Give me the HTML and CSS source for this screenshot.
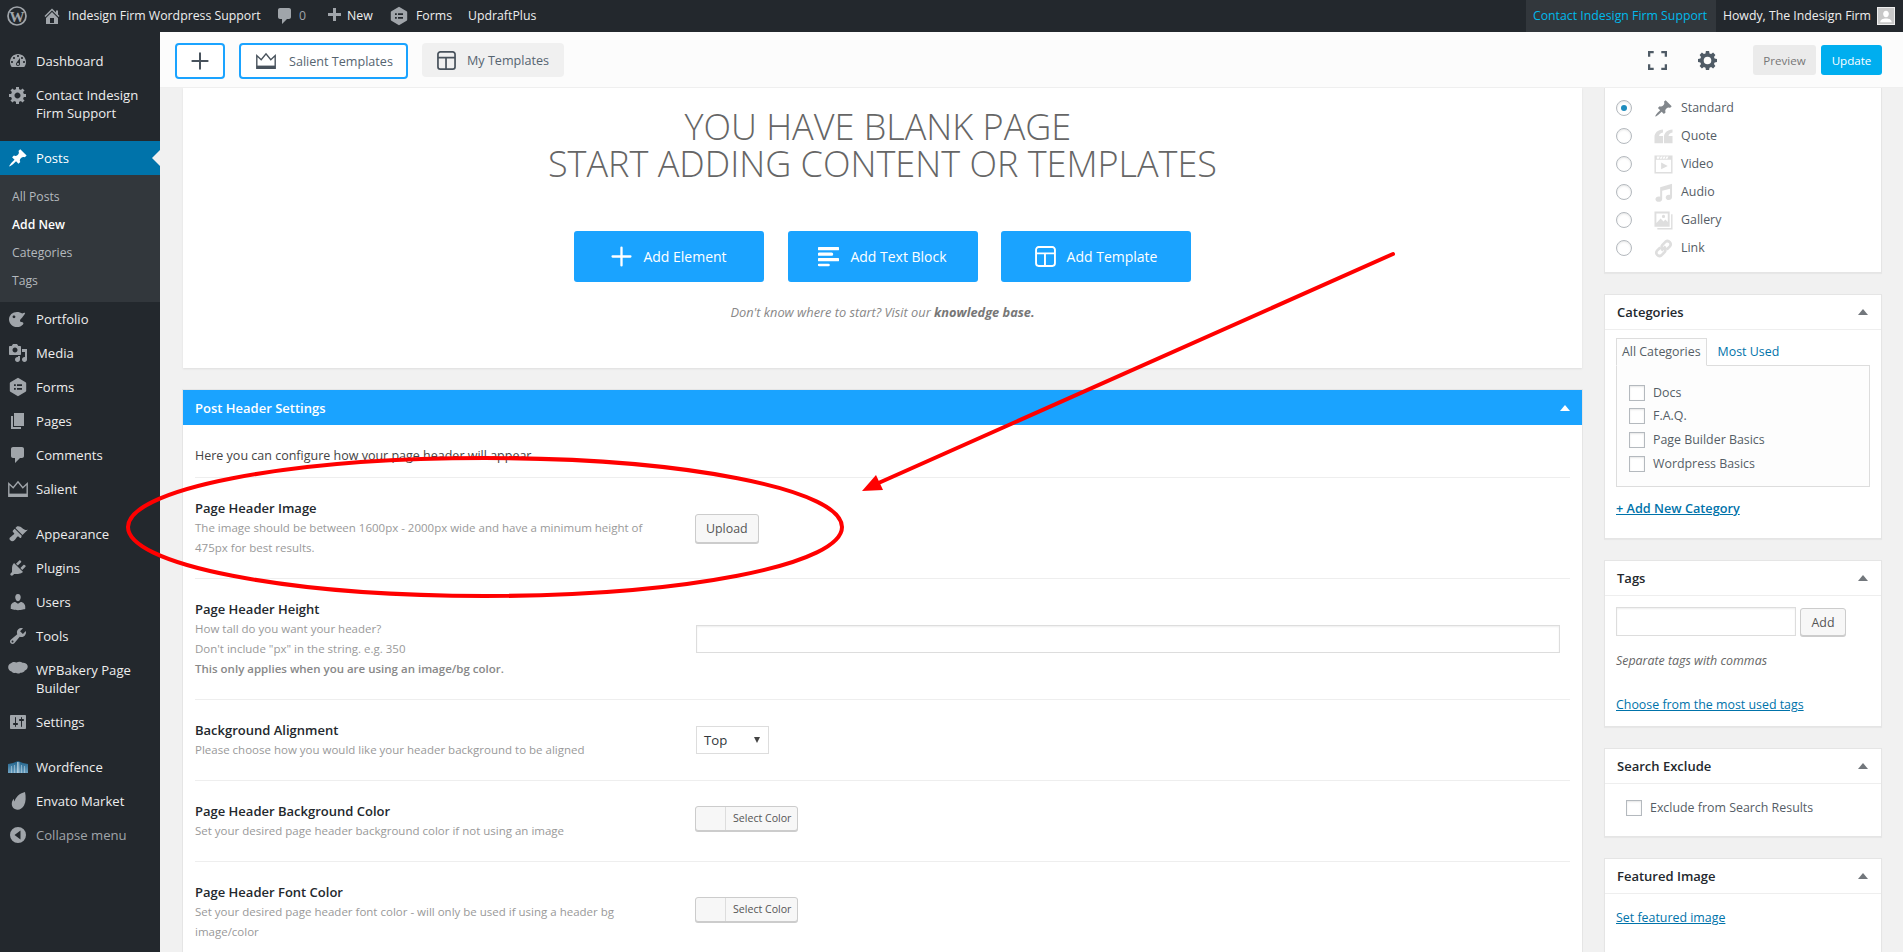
FILE: index.html
```html
<!DOCTYPE html>
<html lang="en">
<head>
<meta charset="utf-8">
<title>Add New Post</title>
<link rel="stylesheet" href="styles.css">
</head>
<body>
<svg class="sprite" width="0" height="0">
  <defs>
    <symbol id="i-dash" viewBox="0 0 20 20"><path d="M3.76 16h12.48c1.1-1.37 1.76-3.11 1.76-5 0-4.42-3.58-8-8-8s-8 3.58-8 8c0 1.89.66 3.63 1.76 5zM10 4c.55 0 1 .45 1 1s-.45 1-1 1-1-.45-1-1 .45-1 1-1zM6 6c.55 0 1 .45 1 1s-.45 1-1 1-1-.45-1-1 .45-1 1-1zm8 0c.55 0 1 .45 1 1s-.45 1-1 1-1-.45-1-1 .45-1 1-1zm-5.37 5.55L12 7v6c0 1.1-.9 2-2 2s-2-.9-2-2c0-.57.24-1.08.63-1.45zM4 10c.55 0 1 .45 1 1s-.45 1-1 1-1-.45-1-1 .45-1 1-1zm12 0c.55 0 1 .45 1 1s-.45 1-1 1-1-.45-1-1 .45-1 1-1zm-5 3c0-.55-.45-1-1-1s-1 .45-1 1 .45 1 1 1 1-.45 1-1z"/></symbol>
    <symbol id="i-gear" viewBox="0 0 20 20"><path fill-rule="evenodd" d="M18 12h-2.18c-.17.7-.44 1.35-.81 1.93l1.54 1.54-2.1 2.1-1.54-1.54c-.58.36-1.23.63-1.91.79V19H8v-2.18c-.68-.16-1.33-.43-1.91-.79l-1.54 1.54-2.12-2.12 1.54-1.54c-.36-.58-.63-1.23-.79-1.91H1V9.03h2.17c.16-.7.44-1.35.8-1.94L2.43 5.55l2.1-2.1 1.54 1.54c.58-.37 1.24-.64 1.93-.81V2h3v2.18c.68.16 1.33.43 1.91.79l1.54-1.54 2.12 2.12-1.54 1.54c.36.59.64 1.24.8 1.94H18V12zm-8.5 1.5c1.66 0 3-1.34 3-3s-1.34-3-3-3-3 1.34-3 3 1.34 3 3 3z"/></symbol>
    <symbol id="i-pin" viewBox="0 0 20 20"><path d="M10.44 3.02l1.82-1.82 6.36 6.35-1.83 1.82c-1.05-.68-2.48-.57-3.41.36l-.75.75c-.92.93-1.04 2.35-.35 3.41l-1.83 1.82-2.41-2.41-2.8 2.79c-.42.42-3.38 2.71-3.8 2.29s1.86-3.39 2.28-3.81l2.79-2.79L4.1 9.36l1.83-1.82c1.05.69 2.48.57 3.41-.36l.75-.75c.93-.92 1.05-2.35.35-3.41z"/></symbol>
    <symbol id="i-art" viewBox="0 0 20 20"><path fill-rule="evenodd" d="M9 3c-4.400 0-8 3.200-8 7.200S4.400 18 9 18c2.400 0 4.600-1 6-2.600 1.200-1.500-.2-2.600-1.500-2.500-1.100.1-1.900-.9-1.300-2 .8-1.400 3.100-2.800 5-6.900-.8-.6-1.900-.1-2.900.6C12.900 3.700 11 3 9 3zM6 6.500c.8 0 1.400.6 1.400 1.300S6.800 9.200 6 9.200s-1.400-.6-1.400-1.400S5.200 6.500 6 6.500z"/></symbol>
    <symbol id="i-media" viewBox="0 0 20 20"><path d="M13 11V4c0-.55-.45-1-1-1h-1.670L9 1H5L3.670 3H2c-.55 0-1 .45-1 1v7c0 .55.45 1 1 1h10c.55 0 1-.45 1-1zM7 4.500c1.380 0 2.500 1.120 2.500 2.500S8.380 9.500 7 9.500 4.500 8.380 4.500 7 5.620 4.500 7 4.500zM14 6h5v10.500c0 1.380-1.120 2.500-2.500 2.500S14 17.880 14 16.500s1.120-2.500 2.500-2.500c.17 0 .34.02.5.05V9h-3V6zm-4 8.050V13h2v3.500c0 1.380-1.120 2.500-2.500 2.500S7 17.880 7 16.500 8.120 14 9.500 14c.17 0 .34.02.5.05z"/></symbol>
    <symbol id="i-forms" viewBox="0 0 20 20"><path fill-rule="evenodd" d="M10 .8l7.600 4.400c.4.200.6.600.6 1v7.600c0 .4-.2.800-.6 1L10 19.200 2.400 14.800c-.4-.2-.6-.6-.6-1V6.200c0-.4.2-.8.6-1zM6 7.200v1.900h1.800V7.200zm3 0v1.900h5V7.200zM6 10.900v1.900h1.800v-1.900zm3 0v1.900h5v-1.900z"/></symbol>
    <symbol id="i-page" viewBox="0 0 20 20"><path d="M6 15V2h10v13H6zm-1 1h8v2H3V5h2v11z"/></symbol>
    <symbol id="i-comment" viewBox="0 0 20 20"><path d="M5 2h9c1.100 0 2 .9 2 2v7c0 1.100-.9 2-2 2h-2l-5 5v-5H5c-1.100 0-2-.9-2-2V4c0-1.100.9-2 2-2z"/></symbol>
    <symbol id="i-crown" viewBox="0 0 20 20"><path fill="none" stroke="currentColor" stroke-width="1.400" d="M.8 17.200V4.600l4.400 4.200L10 2.800l4.800 6 4.400-4.200v12.600z"/><path d="M.8 14.600h18.400v2.600H.8z"/></symbol>
    <symbol id="i-brush" viewBox="0 0 20 20"><path d="M14.480 11.060L7.410 3.990l1.500-1.500c.5-.56 2.300-.47 3.510.32 1.210.8 1.430 1.280 2.910 2.100 1.180.64 2.450 1.260 4.450.85zm-.71.71L6.700 4.700 4.930 6.470c-.39.39-.39 1.020 0 1.410l1.060 1.060c.39.39.39 1.030 0 1.420-.6.6-1.430 1.110-2.210 1.690-.35.26-.7.53-1.010.84C1.430 13.230.91 14.970 2.300 16.360s3.130.87 4.440-.44c.31-.31.58-.66.84-1.010.58-.78 1.090-1.610 1.690-2.210.39-.39 1.030-.39 1.420 0l1.060 1.060c.39.39 1.020.39 1.410 0z"/></symbol>
    <symbol id="i-plug" viewBox="0 0 20 20"><path d="M13.110 4.360L9.870 7.600 8 5.730l3.240-3.240c.35-.34 1.050-.2 1.560.32.52.51.66 1.210.31 1.550zm-8 1.770l.91-1.120 9.010 9.010-1.190.84c-.71.71-2.630 1.160-3.820 1.160H6.140L4.900 17.260c-.59.59-1.540.59-2.120 0-.59-.58-.59-1.530 0-2.120l1.240-1.240v-3.880c0-1.130.4-3.190 1.090-3.890zm7.260 3.970l3.240-3.240c.34-.35 1.040-.21 1.550.31.52.51.66 1.210.31 1.550l-3.240 3.250z"/></symbol>
    <symbol id="i-user" viewBox="0 0 20 20"><path d="M10 9.250c-2.270 0-2.730-3.440-2.730-3.440C7 4.020 7.820 2 9.970 2c2.160 0 2.980 2.020 2.710 3.810 0 0-.41 3.440-2.68 3.440zm0 2.570L12.720 10c2.390 0 4.520 2.330 4.520 4.530v2.490s-3.650 1.130-7.240 1.130c-3.650 0-7.240-1.130-7.240-1.130v-2.490c0-2.250 1.940-4.480 4.470-4.480z"/></symbol>
    <symbol id="i-tool" viewBox="0 0 20 20"><path fill-rule="evenodd" d="M16.680 9.770c-1.340 1.340-3.300 1.670-4.950.99l-5.410 6.520c-.99.99-2.590.99-3.580 0s-.99-2.590 0-3.570l6.520-5.42c-.68-1.650-.35-3.61.99-4.950 1.280-1.280 3.120-1.620 4.720-1.060l-2.890 2.890 2.820 2.820 2.860-2.870c.53 1.580.18 3.390-1.080 4.650zM3.810 16.210c.4.390 1.040.39 1.430 0 .4-.4.4-1.040 0-1.430-.39-.4-1.030-.4-1.430 0-.39.39-.39 1.030 0 1.430z"/></symbol>
    <symbol id="i-cloud" viewBox="0 0 20 20"><path d="M3 3.200C4.500 1.800 7 1.700 8.500 2.600 10.300 1.400 13 1.500 14.500 2.800c2-.3 4.300.7 5 2.800.7 2.200-.6 4.400-2.700 5-.7 1.600-2.700 2.700-4.400 2.100-1.200 1.100-3.400 1.100-4.600.1-1.500.5-3.400 0-4.200-1.300C1.500 11 0 9 .2 6.800.4 5 1.500 3.700 3 3.200z"/></symbol>
    <symbol id="i-sliders" viewBox="0 0 20 20"><path fill-rule="evenodd" d="M18 16V4c0-.55-.45-1-1-1H3c-.55 0-1 .45-1 1v12c0 .55.45 1 1 1h14c.55 0 1-.45 1-1zM8 11h1c.55 0 1 .45 1 1s-.45 1-1 1H8v1.500c0 .28-.22.5-.5.5s-.5-.22-.5-.5V13H6c-.55 0-1-.45-1-1s.45-1 1-1h1V5.500c0-.28.22-.5.5-.5s.5.22.5.5V11zm5-2h-1c-.55 0-1-.45-1-1s.45-1 1-1h1V5.500c0-.28.22-.5.5-.5s.5.22.5.5V7h1c.55 0 1 .45 1 1s-.45 1-1 1h-1v5.500c0 .28-.22.5-.5.5s-.5-.22-.5-.5V9z"/></symbol>
    <symbol id="i-leaf" viewBox="0 0 20 20"><path d="M17 1c1 4.500 1 10-1 13.500-1.500 2.800-4 4.300-6.500 4.200-3.800-.1-6-3-5.700-6.400.2-2 1-3.400 2-4.500.1 1.200.3 2 .8 2.800C7.500 6.500 11 2.500 17 1z"/></symbol>
    <symbol id="i-collapse" viewBox="0 0 20 20"><path fill-rule="evenodd" d="M10 2a8 8 0 110 16 8 8 0 010-16zm2.500 3.500L6.500 10l6 4.500z"/></symbol>
    <symbol id="i-plus" viewBox="0 0 20 20"><path d="M17 7v3h-5v5H9v-5H4V7h5V2h3v5h5z"/></symbol>
    <symbol id="i-quote" viewBox="0 0 20 20"><path d="M9.500 2.500v3.300C7 6.300 5.500 7.700 5.300 9.500h4.200v7.500H.5v-6.500C.5 6 3.800 3 9.500 2.500zm10 0v3.300c-2.500.5-4 1.900-4.200 3.700h4.200v7.500h-9v-6.500c0-4.500 3.300-7.500 9-8z"/></symbol>
    <symbol id="i-video" viewBox="0 0 20 20"><path fill-rule="evenodd" d="M.5.500h19v19H.5zM2 5v13h16V5zm5.500 3l7 3.500-7 3.500zM3 1.500v2.500h2l1.200-2.500zm4.200 0L6 4h2l1.200-2.500zm3 0L9 4h2l1.200-2.500zm3 0L12 4h2l1.200-2.500z"/></symbol>
    <symbol id="i-audio" viewBox="0 0 20 20"><path d="M6.500 4.500L19 .8v14c0 1.900-1.500 3.200-3.400 3.200s-3.300-1.100-3.300-2.700 1.500-2.900 3.400-2.900c.4 0 .8.100 1.200.2V6L8.600 8.200v8.600c0 1.700-1.500 3-3.400 3S1.500 18.700 1.500 17s1.500-2.900 3.400-2.900c.6 0 1.100.1 1.600.3z"/></symbol>
    <symbol id="i-gallery" viewBox="0 0 20 20"><path fill-rule="evenodd" d="M.5.500h16v16H.5zM2.500 2.500v10l4.500-4.500 3 3 2-2 2.500 2.500v-9zm7.500 1.500a1.700 1.700 0 110 3.400 1.700 1.700 0 010-3.400zM18 3.500h1.500v16h-16V18H18z"/></symbol>
    <symbol id="i-link" viewBox="0 0 20 20"><path fill="none" stroke="currentColor" stroke-width="2.800" d="M7.800 12.200l4.400-4.400M6.600 8.900l-3.300 3.300a3.400 3.400 0 004.500 5l3.300-3.300a3.400 3.400 0 00.3-4M13.400 11.100l3.300-3.300a3.400 3.400 0 00-4.500-5L8.900 6.100a3.400 3.400 0 00-.3 4"/></symbol>
    <symbol id="i-layout" viewBox="0 0 20 20"><path fill="none" stroke="currentColor" stroke-width="1.800" d="M3.500 1h13A2.500 2.500 0 0119 3.500v13a2.500 2.500 0 01-2.500 2.500h-13A2.500 2.500 0 011 16.500v-13A2.500 2.500 0 013.500 1zM1 7h18M9.500 7v12"/></symbol>
    <symbol id="i-lines" viewBox="0 0 20 20"><path d="M1 1h18a1 1 0 010 3H1a1 1 0 010-3zm0 5.300h12a1 1 0 010 3H1a1 1 0 010-3zm0 5.200h18a1 1 0 010 3H1a1 1 0 010-3zm0 5.300h9a1 1 0 010 2.500H1a1 1 0 010-2.500z"/></symbol>
    <symbol id="i-thin-plus" viewBox="0 0 20 20"><path fill="none" stroke="currentColor" stroke-width="2.200" stroke-linecap="round" d="M10 1.500v17M1.500 10h17"/></symbol>
  </defs>
</svg>

<header class="adminbar">
  <div class="ab-wplogo"><svg viewBox="0 0 20 20" class="ab-ic-w"><circle cx="10" cy="10" r="9" fill="none" stroke="currentColor" stroke-width="1.700"/><text x="10" y="15.500" text-anchor="middle" class="ab-w-letter">W</text></svg></div>
  <div class="ab-item ab-site"><svg class="ab-ic-home" viewBox="0 0 20 20"><path d="M16 8.500l1.530 1.530-1.060 1.060L10 4.620l-6.470 6.470-1.060-1.060L10 2.500l4 4v-2h2v4zm-6-2.460l6 5.990V18H4v-5.970zM12 17v-5H8v5h4z"/></svg>Indesign Firm Wordpress Support</div>
  <div class="ab-item ab-comments"><svg class="ab-ic-s"><use href="#i-comment"/></svg><span class="ab-count">0</span></div>
  <div class="ab-item ab-new"><svg class="ab-ic-s"><use href="#i-plus"/></svg>New</div>
  <div class="ab-item ab-forms"><svg class="ab-ic-s"><use href="#i-forms"/></svg>Forms</div>
  <div class="ab-item ab-updraft">UpdraftPlus</div>
  <div class="ab-right">
    <div class="ab-contact">Contact Indesign Firm Support</div>
    <div class="ab-howdy">Howdy, The Indesign Firm<span class="ab-avatar"><svg viewBox="0 0 18 18"><rect width="18" height="18" fill="#c8c8c8"/><path fill="#fff" d="M9 3c2 0 3.200 1.600 3.200 3.600S11 10.500 9 10.500 5.800 8.600 5.800 6.600 7 3 9 3zM2.500 16c.2-3 3-4.200 6.500-4.200s6.300 1.200 6.500 4.200z"/></svg></span></div>
  </div>
</header>

<div class="shell">
  <nav class="adminmenu">
    <ul class="menu">
      <li class="mi"><svg class="mi-ic"><use href="#i-dash"/></svg><span>Dashboard</span></li>
      <li class="mi"><svg class="mi-ic"><use href="#i-gear"/></svg><span>Contact Indesign Firm Support</span></li>
      <li class="sep"></li>
      <li class="mi current"><svg class="mi-ic"><use href="#i-pin"/></svg><span>Posts</span></li>
      <li class="submenu">
        <div class="sub">All Posts</div>
        <div class="sub on">Add New</div>
        <div class="sub">Categories</div>
        <div class="sub">Tags</div>
      </li>
      <li class="mi"><svg class="mi-ic"><use href="#i-art"/></svg><span>Portfolio</span></li>
      <li class="mi"><svg class="mi-ic"><use href="#i-media"/></svg><span>Media</span></li>
      <li class="mi"><svg class="mi-ic"><use href="#i-forms"/></svg><span>Forms</span></li>
      <li class="mi"><svg class="mi-ic"><use href="#i-page"/></svg><span>Pages</span></li>
      <li class="mi"><svg class="mi-ic"><use href="#i-comment"/></svg><span>Comments</span></li>
      <li class="mi"><svg class="mi-ic"><use href="#i-crown"/></svg><span>Salient</span></li>
      <li class="sep"></li>
      <li class="mi"><svg class="mi-ic"><use href="#i-brush"/></svg><span>Appearance</span></li>
      <li class="mi"><svg class="mi-ic"><use href="#i-plug"/></svg><span>Plugins</span></li>
      <li class="mi"><svg class="mi-ic"><use href="#i-user"/></svg><span>Users</span></li>
      <li class="mi"><svg class="mi-ic"><use href="#i-tool"/></svg><span>Tools</span></li>
      <li class="mi"><svg class="mi-ic"><use href="#i-cloud"/></svg><span>WPBakery Page Builder</span></li>
      <li class="mi"><svg class="mi-ic"><use href="#i-sliders"/></svg><span>Settings</span></li>
      <li class="sep"></li>
      <li class="mi"><svg class="mi-ic" viewBox="0 0 20 12"><defs><linearGradient id="wf" x1="0" y1="0" x2="0" y2="1"><stop offset="0" stop-color="#1c5f88"/><stop offset="1" stop-color="#6ea2c2"/></linearGradient></defs><path fill="url(#wf)" d="M0 3l5-1 5-2 5 2 5 1v9H0z"/><path fill="#cfe0ea" d="M9 1h.7v11H9zm1.500 0h.7v11h-.7zM3 5h.5v7H3zm13 0h.5v7H16zM6 4h.5v8H6zm7 0h.5v8H13z"/></svg><span>Wordfence</span></li>
      <li class="mi"><svg class="mi-ic"><use href="#i-leaf"/></svg><span>Envato Market</span></li>
      <li class="mi collapse"><svg class="mi-ic"><use href="#i-collapse"/></svg><span>Collapse menu</span></li>
    </ul>
  </nav>

  <div class="workspace">
    <div class="toolbar">
      <button class="tb-btn tb-add"><svg class="tb-plus"><use href="#i-thin-plus"/></svg></button>
      <button class="tb-btn tb-salient"><svg class="tb-crown"><use href="#i-crown"/></svg>Salient Templates</button>
      <button class="tb-btn tb-mine"><svg class="tb-layout"><use href="#i-layout"/></svg>My Templates</button>
      <div class="tb-right">
        <svg class="tb-full" viewBox="0 0 20 20"><path fill="none" stroke="#4f5b66" stroke-width="2.400" d="M1.200 6V1.200H6M14 1.200h4.800V6M18.800 14v4.800H14M6 18.800H1.200V14"/></svg>
        <svg class="tb-gear" viewBox="0 0 20 20"><path fill="#4f5b66" fill-rule="evenodd" d="M8.300 0h3.400l.4 2.500 1.700.7 2.100-1.500 2.400 2.400-1.500 2.100.7 1.700 2.500.4v3.400l-2.500.4-.7 1.700 1.500 2.100-2.400 2.400-2.100-1.500-1.700.7-.4 2.500H8.300l-.4-2.500-1.700-.7-2.100 1.500-2.400-2.400 1.500-2.100-.7-1.700-2.500-.4V8.300l2.500-.4.7-1.700-1.500-2.100 2.400-2.400 2.100 1.500 1.700-.7zM10 6a4 4 0 100 8 4 4 0 000-8z"/></svg>
        <button class="tb-preview">Preview</button>
        <button class="tb-update">Update</button>
      </div>
    </div>

    <div class="columns">
      <main class="main">
        <section class="blank">
          <h1 class="blank-title">YOU HAVE BLANK PAGE&nbsp;<br>START ADDING CONTENT OR TEMPLATES</h1>
          <div class="blank-actions">
            <button class="cta"><svg class="cta-ic"><use href="#i-thin-plus"/></svg>Add Element</button>
            <button class="cta"><svg class="cta-ic"><use href="#i-lines"/></svg>Add Text Block</button>
            <button class="cta"><svg class="cta-ic"><use href="#i-layout"/></svg>Add Template</button>
          </div>
          <p class="blank-hint">Don't know where to start? Visit our <b>knowledge base.</b></p>
        </section>

        <section class="settings">
          <header class="settings-head"><span>Post Header Settings</span><i class="tri tri-white"></i></header>
          <div class="settings-body">
            <p class="intro">Here you can configure how your page header will appear.</p>
            <div class="row">
              <div class="row-label"><h4>Page Header Image</h4><p>The image should be between 1600px - 2000px wide and have a minimum height of 475px for best results.</p></div>
              <div class="row-field"><button class="wpbtn">Upload</button></div>
            </div>
            <div class="row">
              <div class="row-label"><h4>Page Header Height</h4><p>How tall do you want your header?<br>Don't include "px" in the string. e.g. 350<br><span class="medium">This only applies when you are using an image/bg color.</span></p></div>
              <div class="row-field wide"><input class="txt" type="text"></div>
            </div>
            <div class="row">
              <div class="row-label"><h4>Background Alignment</h4><p>Please choose how you would like your header background to be aligned</p></div>
              <div class="row-field"><div class="sel"><span>Top</span><i class="sel-arrow"></i></div></div>
            </div>
            <div class="row">
              <div class="row-label"><h4>Page Header Background Color</h4><p>Set your desired page header background color if not using an image</p></div>
              <div class="row-field"><div class="color"><span class="swatch"></span><span class="color-text">Select Color</span></div></div>
            </div>
            <div class="row">
              <div class="row-label"><h4>Page Header Font Color</h4><p>Set your desired page header font color - will only be used if using a header bg image/color</p></div>
              <div class="row-field"><div class="color"><span class="swatch"></span><span class="color-text">Select Color</span></div></div>
            </div>
          </div>
        </section>
      </main>

      <aside class="side">
        <section class="box box-format">
          <label class="fmt"><span class="radio on"></span><svg class="fmt-ic dark"><use href="#i-pin"/></svg>Standard</label>
          <label class="fmt"><span class="radio"></span><svg class="fmt-ic"><use href="#i-quote"/></svg>Quote</label>
          <label class="fmt"><span class="radio"></span><svg class="fmt-ic"><use href="#i-video"/></svg>Video</label>
          <label class="fmt"><span class="radio"></span><svg class="fmt-ic"><use href="#i-audio"/></svg>Audio</label>
          <label class="fmt"><span class="radio"></span><svg class="fmt-ic"><use href="#i-gallery"/></svg>Gallery</label>
          <label class="fmt"><span class="radio"></span><svg class="fmt-ic"><use href="#i-link"/></svg>Link</label>
        </section>

        <section class="box">
          <header class="box-head"><span>Categories</span><i class="tri"></i></header>
          <div class="box-body cats">
            <div class="tabs"><span class="tab on">All Categories</span><span class="tab">Most Used</span></div>
            <div class="tab-panel">
              <label class="chk"><span class="check"></span>Docs</label>
              <label class="chk"><span class="check"></span>F.A.Q.</label>
              <label class="chk"><span class="check"></span>Page Builder Basics</label>
              <label class="chk"><span class="check"></span>Wordpress Basics</label>
            </div>
            <a class="link add-cat">+ Add New Category</a>
          </div>
        </section>

        <section class="box">
          <header class="box-head"><span>Tags</span><i class="tri"></i></header>
          <div class="box-body tags">
            <div class="tag-form"><input class="txt tag-input" type="text"><button class="wpbtn tag-add">Add</button></div>
            <p class="howto">Separate tags with commas</p>
            <a class="link tag-link">Choose from the most used tags</a>
          </div>
        </section>

        <section class="box">
          <header class="box-head"><span>Search Exclude</span><i class="tri"></i></header>
          <div class="box-body exclude"><label class="chk"><span class="check"></span>Exclude from Search Results</label></div>
        </section>

        <section class="box">
          <header class="box-head"><span>Featured Image</span><i class="tri"></i></header>
          <div class="box-body featured"><a class="link">Set featured image</a></div>
        </section>
      </aside>
    </div>
  </div>
</div>

<svg class="annotation" viewBox="0 0 1903 952" width="1903" height="952">
  <ellipse cx="485" cy="527" rx="357" ry="69" fill="none" stroke="#ff0000" stroke-width="4"/>
  <path d="M1393 254L874 485" fill="none" stroke="#ff0000" stroke-width="4" stroke-linecap="round"/>
  <path d="M862 491L876 475L883 490Z" fill="#ff0000"/>
</svg>
</body>
</html>
```
FILE: styles.css
```css
* { box-sizing: border-box; }
html, body { margin: 0; padding: 0; }
body {
  position: relative;
  width: 1903px;
  height: 952px;
  overflow: hidden;
  background: #f1f1f1;
  color: #444;
  font-family: "Open Sans", "Noto Sans", "Liberation Sans", sans-serif;
  font-size: 12.4px;
  line-height: 20px;
}
h1, h4, p, ul { margin: 0; padding: 0; }
ul { list-style: none; }
button { font-family: inherit; cursor: pointer; }
.sprite { position: absolute; }
svg { display: block; fill: currentColor; flex: none; }

/* admin bar */
.adminbar {
  display: flex;
  align-items: center;
  height: 32px;
  background: #23282d;
  color: #eee;
  font-size: 12.3px;
}
.ab-wplogo { width: 44px; padding-left: 7px; color: #a0a5aa; }
.ab-ic-w { width: 20px; height: 20px; }
.ab-w-letter { font-family: "Liberation Serif", serif; font-size: 15px; font-weight: 700; }
.ab-item { display: flex; align-items: center; height: 32px; white-space: nowrap; }
.ab-ic-home { width: 20px; height: 20px; margin: 0 6px 0 -2px; color: #a0a5aa; }
.ab-ic-s { width: 20px; height: 20px; color: #a0a5aa; }
.ab-site { width: 231px; }
.ab-comments { width: 50px; }
.ab-count { margin-left: 4px; color: #a0a5aa; }
.ab-new { width: 63px; margin-left: -1px; margin-right: 1px; }
.ab-new .ab-ic-s { margin-right: 3px; }
.ab-forms { width: 79px; margin-left: 1px; }
.ab-forms .ab-ic-s { margin-right: 7px; }
.ab-right { display: flex; margin-left: auto; height: 32px; }
.ab-contact {
  width: 190px;
  padding-left: 7px;
  line-height: 32px;
  background: #32373c;
  color: #00b9eb;
}
.ab-howdy { display: flex; align-items: center; padding: 0 8px 0 7px; white-space: nowrap; }
.ab-avatar { margin-left: 6px; border: 1px solid #eee; width: 18px; height: 18px; display: block; overflow: hidden; }
.ab-avatar svg { width: 16px; height: 16px; }

/* shell */
.shell { display: flex; height: 920px; }
.adminmenu { width: 160px; flex: none; background: #23282d; padding-top: 12px; }
.mi {
  position: relative;
  display: flex;
  align-items: flex-start;
  min-height: 34px;
  padding: 8px 12px 8px 0;
  color: #eee;
  font-size: 13.1px;
  line-height: 18px;
}
.mi-ic { width: 20px; height: 20px; margin: -1px 8px -1px 8px; color: #a0a5aa; flex: none; }
.mi > span { flex: 1; }
.sep { height: 11px; }
.current { background: #0073aa; color: #fff; }
.current .mi-ic { color: #fff; }
.current::after {
  content: "";
  position: absolute;
  right: 0;
  top: 9px;
  border: 8px solid transparent;
  border-right-color: #f1f1f1;
  border-left-width: 0;
}
.submenu { background: #32373c; padding: 8px 0 7px; }
.sub { height: 28px; padding: 5px 12px; line-height: 18px; font-size: 12.2px; color: #b4b9be; }
.sub.on { color: #fff; font-weight: 600; }
.collapse { color: #a0a5aa; }

/* workspace */
.workspace { flex: 1; min-width: 0; display: flex; flex-direction: column; }
.toolbar {
  display: flex;
  align-items: flex-start;
  height: 56px;
  padding: 11px 21px 0 15px;
  background: #fcfcfc;
  border-bottom: 1px solid #efefef;
  flex: none;
}
.tb-btn {
  display: flex;
  align-items: center;
  height: 36px;
  border-radius: 4px;
  font-size: 12.6px;
  color: #566470;
  background: #fff;
  border: 2px solid #1aa3ff;
  padding: 0;
}
.tb-add { width: 50px; justify-content: center; margin-right: 14px; }
.tb-plus { width: 18px; height: 18px; color: #48525c; }
.tb-salient { width: 169px; padding-left: 15px; margin-right: 14px; }
.tb-crown { width: 20px; height: 20px; color: #48525c; margin-right: 13px; }
.tb-mine { width: 142px; height: 34px; background: #f0f0f0; border: 0; padding-left: 15px; }
.tb-layout { width: 19px; height: 19px; color: #48525c; margin-right: 11px; }
.tb-right { display: flex; align-items: center; margin-left: auto; height: 30px; margin-top: 2px; }
.tb-full { width: 19px; height: 19px; margin-right: 31px; }
.tb-gear { width: 19px; height: 19px; margin-right: 36px; }
.tb-preview, .tb-update { height: 30px; border: 0; border-radius: 3px; font-size: 11.6px; }
.tb-preview { width: 63px; background: #ebebeb; color: #777; margin-right: 5px; }
.tb-update { width: 61px; background: #00aeef; color: #fff; }

.columns { display: flex; gap: 22px; padding: 0 21px 0 23px; flex: 1; min-height: 0; overflow: hidden; }
.main { flex: 1; min-width: 0; }
.side { width: 278px; flex: none; }

/* blank */
.blank {
  height: 280px;
  padding-top: 21px;
  background: #fff;
  box-shadow: 0 1px 2px rgba(0,0,0,.08);
  text-align: center;
}
.blank-title { font-size: 36px; line-height: 36.5px; font-weight: 300; color: #666; }
.blank-actions { display: flex; justify-content: center; gap: 23.5px; margin-top: 49px; }
.cta {
  display: flex;
  align-items: center;
  justify-content: center;
  width: 190px;
  height: 51px;
  border: 0;
  border-radius: 3px;
  background: #1aa3ff;
  color: #fff;
  font-size: 14px;
  padding-bottom: 1px;
}
.cta-ic { width: 21px; height: 21px; margin-right: 11px; }
.blank-hint { margin-top: 21px; font-size: 12.8px; line-height: 18px; font-style: italic; color: #888; }
.blank-hint b { font-weight: 700; color: #777; }

/* settings */
.settings { margin-top: 22px; background: #fff; box-shadow: 0 0 0 1px #e5e5e5; }
.settings-head {
  display: flex;
  align-items: center;
  justify-content: space-between;
  height: 35px;
  padding: 0 12px;
  background: #1aa3ff;
  color: #fff;
  font-size: 13px;
  font-weight: 600;
}
.tri { width: 0; height: 0; border: 5px solid transparent; border-top: 0; border-bottom: 6px solid #72777c; }
.tri-white { border-bottom-color: #fff; }
.settings-body { padding: 0 12px; }
.intro { height: 52px; padding-top: 21px; font-size: 12.5px; color: #444; }
.row { display: flex; align-items: center; padding: 20px 0; border-top: 1px solid #eee; }
.row-label { width: 500px; flex: none; }
.row-label h4 { font-size: 13px; font-weight: 600; color: #23282d; line-height: 20px; }
.row-label p { font-size: 11.5px; line-height: 20px; color: #999; width: 470px; }
.medium { font-weight: 600; color: #888; }
.row-field.wide { flex: 1; padding: 0 10px 0 1px; }
.wpbtn {
  height: 29px;
  padding: 0 10px;
  background: #f7f7f7;
  border: 1px solid #ccc;
  border-radius: 3px;
  box-shadow: 0 1px 0 #ccc;
  color: #555;
  font-size: 12.4px;
}
.txt { display: block; height: 28px; width: 100%; border: 1px solid #ddd; box-shadow: inset 0 1px 2px rgba(0,0,0,.07); background: #fff; }
.sel {
  display: flex;
  align-items: center;
  justify-content: space-between;
  width: 73px;
  height: 28px;
  padding: 0 8px 0 7px;
  margin-left: 1px;
  border: 1px solid #ddd;
  color: #32373c;
  font-size: 13.2px;
}
.sel-arrow { width: 0; height: 0; border: 3px solid transparent; border-top: 6px solid #444; border-bottom: 0; }
.color {
  display: flex;
  width: 103px;
  height: 25px;
  margin-bottom: 5px;
  border: 1px solid #ccc;
  border-radius: 3px;
  box-shadow: 0 1px 0 #ccc;
  background: #f7f7f7;
}
.swatch { width: 30px; border-right: 1px solid #ddd; }
.color-text { padding-left: 7px; font-size: 10.6px; line-height: 22px; color: #555; white-space: nowrap; }

/* side boxes */
.box { margin-bottom: 21px; background: #fff; border: 1px solid #e5e5e5; box-shadow: 0 1px 1px rgba(0,0,0,.04); }
.box-format { height: 185px; padding: 6px 11px 0; border-top: 0; }
.fmt { display: flex; align-items: center; height: 28px; font-size: 12.4px; color: #555d66; }
.radio { width: 16px; height: 16px; margin-right: 22px; border: 1px solid #b4b9be; border-radius: 50%; background: #fff; display: flex; align-items: center; justify-content: center; box-shadow: inset 0 1px 2px rgba(0,0,0,.1); }
.radio.on::before { content: ""; width: 6px; height: 6px; border-radius: 50%; background: #1e8cbe; }
.fmt-ic { width: 19px; height: 19px; margin-right: 8px; color: #dedede; }
.fmt-ic.dark { color: #82878c; }
.box-head {
  display: flex;
  align-items: center;
  justify-content: space-between;
  height: 35px;
  padding: 0 13px 0 12px;
  border-bottom: 1px solid #eee;
  font-size: 13px;
  font-weight: 600;
  color: #23282d;
}
.box-body { padding: 0 11px; }
.cats { height: 208px; padding-top: 8px; }
.tabs { display: flex; height: 27px; position: relative; z-index: 1; font-size: 12.4px; }
.tab { padding: 3px 5px 0; color: #0073aa; }
.tab:nth-child(2) { padding: 4px 0 0 11px; }
.tab.on { color: #555d66; background: #fdfdfd; border: 1px solid #ddd; border-bottom-color: #fdfdfd; height: 28px; }
.tab-panel { height: 122px; padding: 15px 12px 0; background: #fdfdfd; border: 1px solid #ddd; }
.chk { display: flex; align-items: center; height: 23.6px; font-size: 12.4px; color: #555d66; }
.check { width: 16px; height: 16px; margin-right: 8px; border: 1px solid #b4b9be; background: #fff; box-shadow: inset 0 1px 2px rgba(0,0,0,.1); flex: none; }
.link { color: #0073aa; text-decoration: underline; font-size: 12.4px; display: inline-block; }
.add-cat { margin-top: 11px; font-weight: 600; font-size: 12.7px; }
.tags { height: 130px; padding-top: 11px; }
.tag-form { display: flex; gap: 4px; }
.tag-input { width: 180px; height: 29px; }
.tag-add { width: 46px; height: 28px; padding: 0; margin-top: 1px; }
.howto { margin-top: 15px; font-style: italic; color: #666; font-size: 12.4px; }
.tag-link { margin-top: 24px; }
.exclude { height: 52px; padding: 12px 21px 0; }
.featured { padding-top: 14px; height: 60px; }

/* annotation overlay */
.annotation { position: absolute; left: 0; top: 0; pointer-events: none; }
```
